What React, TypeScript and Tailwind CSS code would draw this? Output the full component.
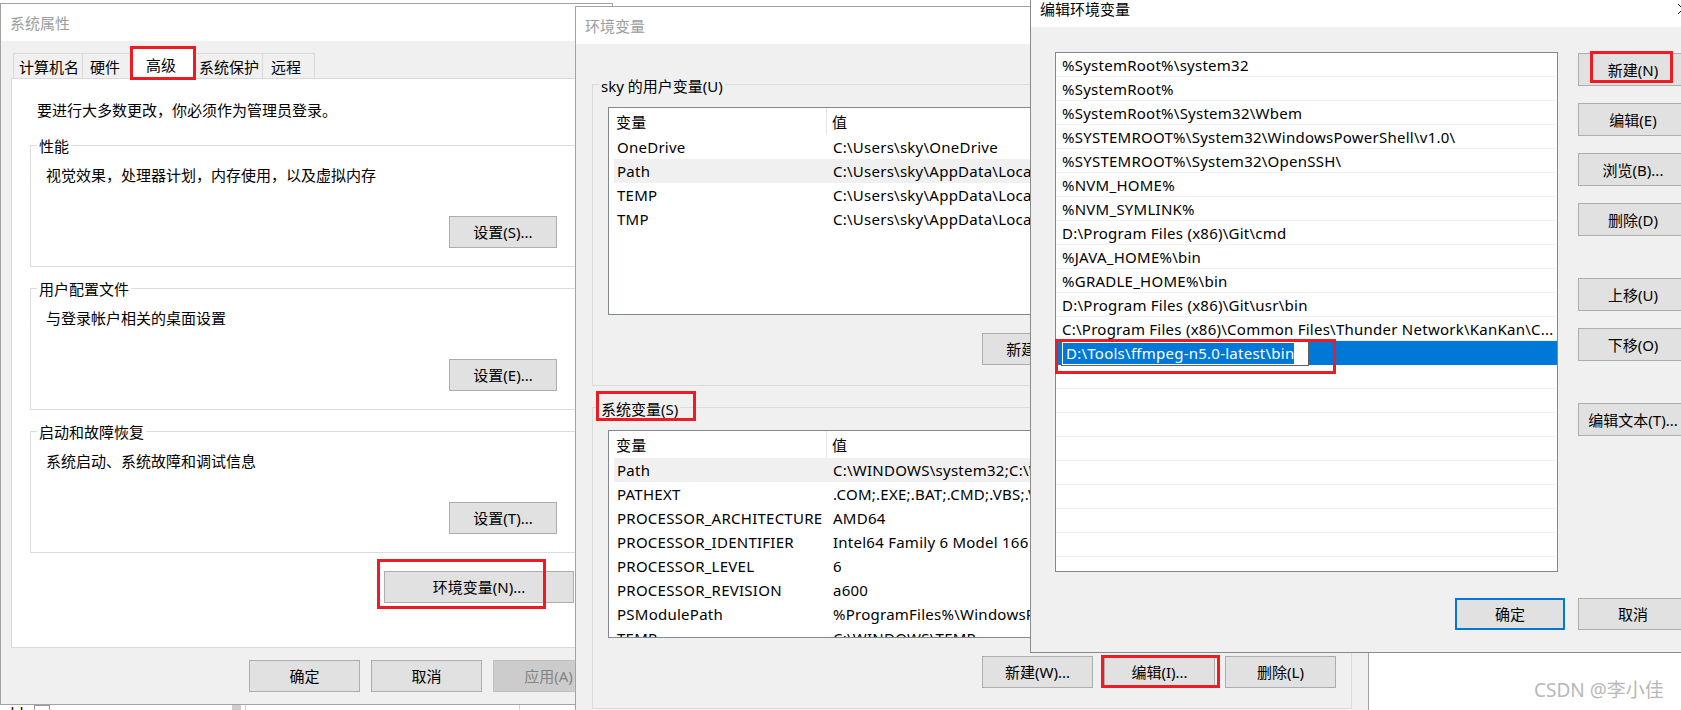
import React from 'react';

type Pair = [string, string];

const userVars: Pair[] = [
  ['OneDrive', 'C:\\Users\\sky\\OneDrive'],
  ['Path', 'C:\\Users\\sky\\AppData\\Local\\Microsoft\\WindowsApps;'],
  ['TEMP', 'C:\\Users\\sky\\AppData\\Local\\Temp'],
  ['TMP', 'C:\\Users\\sky\\AppData\\Local\\Temp'],
];

const systemVars: Pair[] = [
  ['Path', 'C:\\WINDOWS\\system32;C:\\WINDOWS;C:\\WINDOWS\\System32\\Wbem;'],
  ['PATHEXT', '.COM;.EXE;.BAT;.CMD;.VBS;.VBE;.JS;.JSE;.WSF;.WSH;.MSC'],
  ['PROCESSOR_ARCHITECTURE', 'AMD64'],
  ['PROCESSOR_IDENTIFIER', 'Intel64 Family 6 Model 166 Stepping 0, GenuineIntel'],
  ['PROCESSOR_LEVEL', '6'],
  ['PROCESSOR_REVISION', 'a600'],
  ['PSModulePath', '%ProgramFiles%\\WindowsPowerShell\\Modules;C:\\WINDOWS\\system32\\'],
  ['TEMP', 'C:\\WINDOWS\\TEMP'],
];

const pathEntries = [
  '%SystemRoot%\\system32',
  '%SystemRoot%',
  '%SystemRoot%\\System32\\Wbem',
  '%SYSTEMROOT%\\System32\\WindowsPowerShell\\v1.0\\',
  '%SYSTEMROOT%\\System32\\OpenSSH\\',
  '%NVM_HOME%',
  '%NVM_SYMLINK%',
  'D:\\Program Files (x86)\\Git\\cmd',
  '%JAVA_HOME%\\bin',
  '%GRADLE_HOME%\\bin',
  'D:\\Program Files (x86)\\Git\\usr\\bin',
  'C:\\Program Files (x86)\\Common Files\\Thunder Network\\KanKan\\C...',
];

const editingEntry = 'D:\\Tools\\ffmpeg-n5.0-latest\\bin';

interface BtnProps {
  label: string;
  className?: string;
  disabled?: boolean;
  isDefault?: boolean;
}

const WinButton: React.FC<BtnProps> = ({ label, className = '', disabled, isDefault }) => {
  const tone = disabled
    ? 'border border-[#bfbfbf] bg-[#cccccc] text-[#838383]'
    : isDefault
      ? 'border-2 border-[#0078d7] bg-[#e1e1e1] text-black'
      : 'border border-[#adadad] bg-[#e1e1e1] text-black';
  return (
    <div className={`flex shrink-0 items-center justify-center whitespace-nowrap ${tone} ${className}`}>
      {label}
    </div>
  );
};

// group box: border with the caption sitting on the top line
const GroupBox: React.FC<{ label: string; labelClass: string; className: string; children: React.ReactNode }> = ({
  label,
  labelClass,
  className,
  children,
}) => (
  <div className={`flex shrink-0 flex-col border border-[#dcdcdc] ${className}`}>
    <div className={`ml-[6px] w-fit px-[2px] leading-[20px] ${labelClass}`}>{label}</div>
    {children}
  </div>
);

const VarList: React.FC<{ rows: Pair[]; hot: number }> = ({ rows, hot }) => (
  <div className="ml-[15px] mt-[11px] flex h-[208px] w-[729px] shrink-0 flex-col overflow-hidden border border-[#828790] bg-white tracking-[0.25px]">
    <div className="ml-[5px] flex h-[27px] shrink-0">
      <div className="flex w-[213px] shrink-0 items-center border-r border-[#e5e5e5] pl-[2px]">变量</div>
      <div className="flex items-center pl-[5px]">值</div>
    </div>
    {rows.map(([k, v], i) => (
      <div
        key={k + i}
        className={`ml-[5px] flex h-[24px] shrink-0 items-center whitespace-nowrap ${i === hot ? 'bg-[#f0f0f0]' : ''}`}
      >
        <div className="w-[213px] shrink-0 pl-[3px]">{k}</div>
        <div className="pl-[6px]">{v}</div>
      </div>
    ))}
  </div>
);

function SystemProperties() {
  return (
    <div className="absolute left-0 top-[3px] flex h-[702px] w-[613px] flex-col border border-[#a3a3a3] bg-[#f0f0f0]">
      <div className="flex h-[37px] shrink-0 items-center bg-white pl-[9px] text-[#9d9d9d]">系统属性</div>

      {/* tabs */}
      <div className="flex h-[37px] shrink-0 items-end pl-[12px]">
        <div className="flex h-[25px] w-[70px] items-center border border-b-0 border-[#d9d9d9] pl-[5px] pt-[2px]">计算机名</div>
        <div className="flex h-[25px] w-[49px] items-center border border-b-0 border-l-0 border-[#d9d9d9] pl-[7px] pt-[2px]">硬件</div>
        <div className="relative z-10 -mx-[2px] -mb-px flex h-[31px] w-[66px] items-center border border-b-0 border-[#d9d9d9] bg-white pl-[15px] pt-[2px]">高级</div>
        <div className="flex h-[25px] w-[69px] items-center border border-b-0 border-l-0 border-[#d9d9d9] pl-[5px] pt-[2px]">系统保护</div>
        <div className="flex h-[25px] w-[52px] items-center border border-b-0 border-l-0 border-[#d9d9d9] pl-[8px] pt-[2px]">远程</div>
      </div>

      <div className="ml-[10px] flex h-[570px] w-[581px] shrink-0 flex-col border border-[#d9d9d9] bg-white">
        <div className="ml-[25px] mt-[21px]">要进行大多数更改，你必须作为管理员登录。</div>

        <GroupBox label="性能" labelClass="-mt-[10px] bg-white" className="ml-[18px] mt-[25px] h-[122px] w-[552px]">
          <div className="ml-[15px] mt-[9px]">视觉效果，处理器计划，内存使用，以及虚拟内存</div>
          <WinButton label="设置(S)..." className="mr-[24px] mt-[31px] h-[32px] w-[108px] self-end" />
        </GroupBox>

        <GroupBox label="用户配置文件" labelClass="-mt-[10px] bg-white" className="ml-[18px] mt-[21px] h-[122px] w-[552px]">
          <div className="ml-[15px] mt-[9px]">与登录帐户相关的桌面设置</div>
          <WinButton label="设置(E)..." className="mr-[24px] mt-[31px] h-[32px] w-[108px] self-end" />
        </GroupBox>

        <GroupBox label="启动和故障恢复" labelClass="-mt-[10px] bg-white" className="ml-[18px] mt-[21px] h-[122px] w-[552px]">
          <div className="ml-[15px] mt-[9px]">系统启动、系统故障和调试信息</div>
          <WinButton label="设置(T)..." className="mr-[24px] mt-[31px] h-[32px] w-[108px] self-end" />
        </GroupBox>

        <WinButton label="环境变量(N)..." className="ml-[372px] mt-[18px] h-[32px] w-[190px]" />
      </div>

      <div className="ml-[248px] mt-[12px] flex gap-[11px]">
        <WinButton label="确定" className="h-[32px] w-[111px]" />
        <WinButton label="取消" className="h-[32px] w-[111px]" />
        <WinButton label="应用(A)" disabled className="h-[32px] w-[111px]" />
      </div>
    </div>
  );
}

function EnvVariables() {
  return (
    <div className="absolute left-[575px] top-[6px] flex h-[730px] w-[794px] flex-col border border-[#a3a3a3] bg-[#f0f0f0]">
      <div className="flex h-[37px] shrink-0 items-center bg-white pl-[9px] text-[#9d9d9d]">环境变量</div>

      <GroupBox label="sky 的用户变量(U)" labelClass="-mt-[9px] bg-[#f0f0f0]" className="ml-[16px] mt-[40px] h-[302px] w-[760px]">
        <VarList rows={userVars} hot={1} />
        <div className="mr-[15px] mt-[18px] flex justify-end">
          <WinButton label="新建(N)..." className="h-[32px] w-[111px]" />
          <WinButton label="编辑(E)..." className="ml-[11px] h-[32px] w-[111px]" />
          <WinButton label="删除(D)" className="ml-[10px] h-[32px] w-[111px]" />
        </div>
      </GroupBox>

      <GroupBox label="系统变量(S)" labelClass="-mt-[9px] bg-[#f0f0f0]" className="ml-[16px] mt-[21px] h-[302px] w-[760px]">
        <VarList rows={systemVars} hot={0} />
        <div className="mr-[15px] mt-[18px] flex justify-end">
          <WinButton label="新建(W)..." className="h-[32px] w-[111px]" />
          <WinButton label="编辑(I)..." className="ml-[11px] h-[32px] w-[111px]" />
          <WinButton label="删除(L)" className="ml-[10px] h-[32px] w-[111px]" />
        </div>
      </GroupBox>
    </div>
  );
}

function EditEnvVariable() {
  const blanks = Array.from({ length: 9 }, (_, i) => i);
  return (
    <div className="absolute left-[1030px] top-[-10px] flex h-[663px] w-[677px] flex-col border border-[#8a8a8a] bg-[#f0f0f0]">
      <div className="flex h-[36px] shrink-0 items-center bg-white pl-[9px] text-black">
        <span>编辑环境变量</span>
        <div className="ml-auto flex h-full w-[46px] items-center justify-center">
          <svg width="10" height="10" viewBox="0 0 10 10" stroke="#111" strokeWidth="1">
            <path d="M0 0L10 10M10 0L0 10" />
          </svg>
        </div>
      </div>

      <div className="mt-[25px] flex items-start">
        <div className="ml-[24px] flex h-[520px] w-[503px] shrink-0 flex-col overflow-hidden border border-[#828790] bg-white tracking-[0.25px]">
          {pathEntries.map((p, i) => (
            <div key={i} className="flex h-[24px] shrink-0 items-center whitespace-nowrap border-b border-[#f0f0f0] pl-[6px]">
              {p}
            </div>
          ))}
          <div className="flex h-[24px] shrink-0 items-center bg-[#0078d7] pl-[5px]">
            <div className="flex h-[25px] w-[248px] items-center border border-[#5f5f5f] bg-white p-px">
              <span className="h-[21px] whitespace-nowrap bg-[#0078d7] pl-[3px] leading-[21px] text-white">{editingEntry}</span>
            </div>
          </div>
          {blanks.map(i => (
            <div key={'b' + i} className="h-[24px] shrink-0 border-b border-[#f0f0f0]" />
          ))}
        </div>

        <div className="ml-[20px] mt-px flex flex-col">
          <WinButton label="新建(N)" className="h-[33px] w-[110px]" />
          <WinButton label="编辑(E)" className="mt-[17px] h-[33px] w-[110px]" />
          <WinButton label="浏览(B)..." className="mt-[17px] h-[33px] w-[110px]" />
          <WinButton label="删除(D)" className="mt-[17px] h-[33px] w-[110px]" />
          <WinButton label="上移(U)" className="mt-[42px] h-[33px] w-[110px]" />
          <WinButton label="下移(O)" className="mt-[17px] h-[33px] w-[110px]" />
          <WinButton label="编辑文本(T)..." className="mt-[42px] h-[33px] w-[110px]" />
        </div>
      </div>

      <div className="ml-[424px] mt-[26px] flex">
        <WinButton label="确定" isDefault className="h-[32px] w-[110px]" />
        <WinButton label="取消" className="ml-[13px] h-[32px] w-[110px]" />
      </div>
    </div>
  );
}

export default function App() {
  return (
    <div className="relative h-[710px] w-[1681px] overflow-hidden bg-white font-['Noto_Sans','Noto_Sans_CJK_SC',sans-serif] text-[15px] leading-[20px] text-black">
      {/* strip of a window further behind, under 系统属性 */}
      <div className="absolute left-0 top-[705px] flex h-[5px] w-[575px] overflow-hidden">
        <span className="-mt-[3px] ml-[2px] leading-[20px]">eld</span>
        <div className="ml-[10px] h-[20px] w-[16px] border border-[#9a9a9a]" />
        <div className="ml-[182px] h-full w-[9px] bg-[#cdcdcd]" />
        <div className="ml-[4px] h-full w-[275px] border-l border-r border-[#d0d0d0]" />
      </div>

      <SystemProperties />
      <EnvVariables />
      <EditEnvVariable />

      {/* annotation boxes, drawn over all windows */}
      <div className="absolute z-30 left-[130px] top-[46px] h-[34px] w-[66px] border-[3px] border-[#ed1c24]" />
      <div className="absolute z-30 left-[377px] top-[559px] h-[50px] w-[169px] border-[3px] border-[#ed1c24]" />
      <div className="absolute z-30 left-[596px] top-[391px] h-[30px] w-[100px] border-[3px] border-[#ed1c24]" />
      <div className="absolute z-30 left-[1101px] top-[655px] h-[33px] w-[119px] border-[3px] border-[#ed1c24]" />
      <div className="absolute z-30 left-[1055px] top-[339px] h-[35px] w-[281px] border-[3px] border-[#ed1c24]" />
      <div className="absolute z-30 left-[1590px] top-[51px] h-[32px] w-[83px] border-[3px] border-[#ed1c24]" />

      <div className="absolute z-30 left-[1534px] top-[678px] text-[19px] leading-[24px] text-[#b8b8b8]">CSDN @李小佳</div>
    </div>
  );
}
